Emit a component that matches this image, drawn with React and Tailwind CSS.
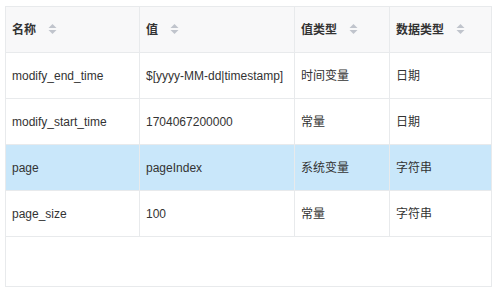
import React from "react";

function SortIcon() {
  return (
    <svg width="9" height="11" viewBox="0 0 9 11" className="ml-[12px] shrink-0">
      <polygon points="4.5,0 8.5,4 0.5,4" fill="#c0c4cc" />
      <polygon points="0.5,6 8.5,6 4.5,10" fill="#c0c4cc" />
    </svg>
  );
}

const cols = ["w-[134px]", "w-[155px]", "w-[95px]", "w-[102px]"];
const headers = ["名称", "值", "值类型", "数据类型"];
const rows = [
  ["modify_end_time", "$[yyyy-MM-dd|timestamp]", "时间变量", "日期"],
  ["modify_start_time", "1704067200000", "常量", "日期"],
  ["page", "pageIndex", "系统变量", "字符串"],
  ["page_size", "100", "常量", "字符串"],
];

export default function App() {
  return (
    <div
      className="w-[497px] h-[293px] bg-white pt-[6px] pl-[5px]"
      style={{ fontFamily: '"Liberation Sans", Arial, "Noto Sans CJK SC", sans-serif' }}
    >
      <div className="w-[487px] border-l border-t border-[#e8eaec] text-[12px] text-[#333]">
        <div className="flex bg-[#f8f8f9]">
          {headers.map((h, i) => (
            <div
              key={i}
              className={`${cols[i]} h-[46px] flex items-center pl-[6px] border-r border-b border-[#e8eaec] font-bold`}
            >
              <span>{h}</span>
              <SortIcon />
            </div>
          ))}
        </div>
        {rows.map((r, ri) => (
          <div key={ri} className={`flex ${ri === 2 ? "bg-[#c9e7fa]" : "bg-white"}`}>
            {r.map((c, i) => (
              <div
                key={i}
                className={`${cols[i]} h-[46px] flex items-center pl-[6px] border-r border-b border-[#e8eaec] whitespace-nowrap overflow-hidden`}
              >
                {c}
              </div>
            ))}
          </div>
        ))}
        <div className="h-[50px] border-r border-b border-[#e8eaec]" />
      </div>
    </div>
  );
}
